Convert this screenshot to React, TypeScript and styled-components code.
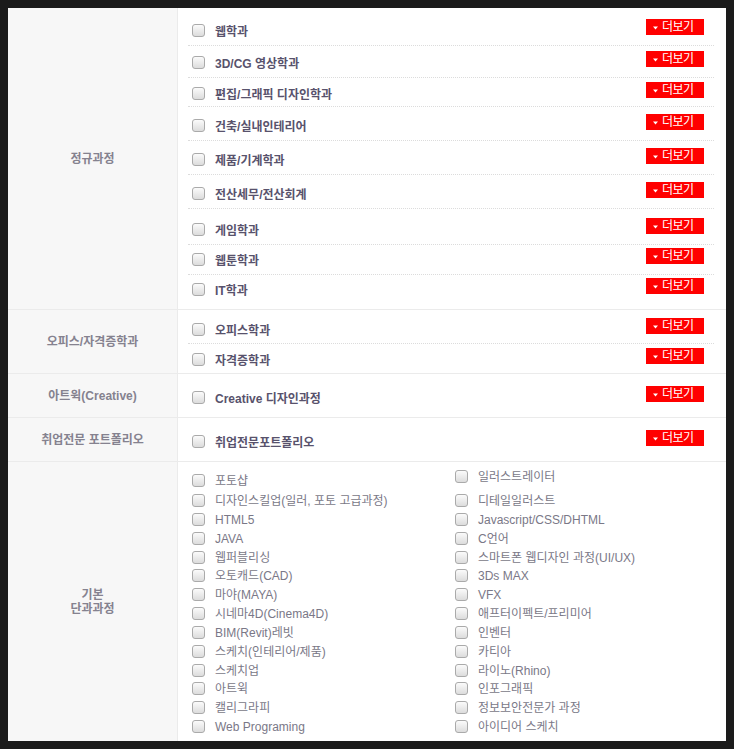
import React from 'react';
import styled, { createGlobalStyle } from 'styled-components';

const GlobalStyle = createGlobalStyle`
  html { background: #1b1b1b; }
  body {
    margin: 8px;
    background: #1b1b1b;
    font-family: "Liberation Sans", "Noto Sans CJK KR", sans-serif;
  }
`;

const Board = styled.div`
  background: #fff;
  width: 718px;
`;

const Section = styled.div<{ $last?: boolean }>`
  display: grid;
  grid-template-columns: 170px 1fr;
  border-bottom: ${(p) => (p.$last ? 'none' : '1px solid #ebebeb')};
`;

const Head = styled.div`
  background: #f7f7f7;
  border-right: 1px solid #ebebeb;
  display: flex;
  align-items: center;
  justify-content: center;
  text-align: center;
  color: #85828f;
  font-size: 12px;
  font-weight: 700;
  line-height: 14px;
  white-space: pre-line;
`;

const Body = styled.div`
  padding: 0 12px 0 10px;
`;

const Row = styled.div<{ $h: number; $pad: number; $last?: boolean }>`
  box-sizing: border-box;
  height: ${(p) => p.$h}px;
  padding-top: ${(p) => p.$pad}px;
  border-bottom: ${(p) => (p.$last ? 'none' : '1px dotted #dcdcdc')};
  display: flex;
  align-items: flex-start;
`;

const Check = styled.input.attrs({ type: 'checkbox' })<{ $top: number }>`
  appearance: none;
  -webkit-appearance: none;
  box-sizing: border-box;
  width: 13px;
  height: 13px;
  margin: ${(p) => p.$top}px 0 0 4px;
  flex: none;
  border: 1px solid #aaaaaa;
  border-radius: 3px;
  background: linear-gradient(#fbfbfb, #dcdcdc);
`;

const CourseLabel = styled.span`
  margin-left: 10px;
  padding-top: 5px;
  font-size: 12px;
  line-height: 16px;
  font-weight: 700;
  color: #58526c;
`;

const MoreButton = styled.a`
  margin-left: auto;
  margin-right: 10px;
  box-sizing: border-box;
  width: 58px;
  height: 16px;
  flex: none;
  background: #ff0000;
  color: #fff;
  display: flex;
  align-items: center;
  padding-left: 7px;
  gap: 4px;
  font-size: 12px;
  letter-spacing: -0.5px;
  line-height: 16px;
  cursor: pointer;
  text-decoration: none;
`;

const Chevron = styled.svg`
  flex: none;
  margin-top: 1px;
`;

const Grid = styled.div`
  display: grid;
  grid-template-columns: 1fr 1fr;
  height: 279px;
`;

const Column = styled.div<{ $pad: number }>`
  padding-top: ${(p) => p.$pad}px;
  display: flex;
  flex-direction: column;
`;

const Item = styled.div<{ $h: number }>`
  height: ${(p) => p.$h}px;
  display: flex;
  align-items: flex-start;
  flex: none;
`;

const ItemLabel = styled.span`
  margin-left: 10px;
  padding-top: 2px;
  font-size: 12px;
  line-height: 17px;
  color: #7a7887;
  white-space: nowrap;
`;

type Course = { label: string; h: number; pad: number };
type Group = { title: string; rows: Course[] };

const groups: Group[] = [
  {
    title: '정규과정',
    rows: [
      { label: '웹학과', h: 38, pad: 11 },
      { label: '3D/CG 영상학과', h: 32, pad: 5 },
      { label: '편집/그래픽 디자인학과', h: 29, pad: 4 },
      { label: '건축/실내인테리어', h: 34, pad: 7 },
      { label: '제품/기계학과', h: 34, pad: 7 },
      { label: '전산세무/전산회계', h: 34, pad: 7 },
      { label: '게임학과', h: 36, pad: 9 },
      { label: '웹툰학과', h: 30, pad: 3 },
      { label: 'IT학과', h: 34, pad: 3 },
    ],
  },
  {
    title: '오피스/자격증학과',
    rows: [
      { label: '오피스학과', h: 34, pad: 8 },
      { label: '자격증학과', h: 29, pad: 4 },
    ],
  },
  {
    title: '아트윅(Creative)',
    rows: [{ label: 'Creative 디자인과정', h: 43, pad: 12 }],
  },
  {
    title: '취업전문 포트폴리오',
    rows: [{ label: '취업전문포트폴리오', h: 43, pad: 12 }],
  },
];

const basicColumns: { pad: number; first: number; items: string[] }[] = [
  {
    pad: 9,
    first: 20,
    items: [
      '포토샵',
      '디자인스킬업(일러, 포토 고급과정)',
      'HTML5',
      'JAVA',
      '웹퍼블리싱',
      '오토캐드(CAD)',
      '마야(MAYA)',
      '시네마4D(Cinema4D)',
      'BIM(Revit)레빗',
      '스케치(인테리어/제품)',
      '스케치업',
      '아트윅',
      '캘리그라피',
      'Web Programing',
    ],
  },
  {
    pad: 5,
    first: 24,
    items: [
      '일러스트레이터',
      '디테일일러스트',
      'Javascript/CSS/DHTML',
      'C언어',
      '스마트폰 웹디자인 과정(UI/UX)',
      '3Ds MAX',
      'VFX',
      '애프터이펙트/프리미어',
      '인벤터',
      '카티아',
      '라이노(Rhino)',
      '인포그래픽',
      '정보보안전문가 과정',
      '아이디어 스케치',
    ],
  },
];

export default function App() {
  return (
    <>
      <GlobalStyle />
      <Board>
        {groups.map((g) => (
          <Section key={g.title}>
            <Head>{g.title}</Head>
            <Body>
              {g.rows.map((r, i) => (
                <Row key={r.label} $h={r.h} $pad={r.pad} $last={i === g.rows.length - 1}>
                  <Check $top={5} />
                  <CourseLabel>{r.label}</CourseLabel>
                  <MoreButton>
                    <Chevron width="5" height="4" viewBox="0 0 5 4">
                      <path d="M0 0.5 L2.5 3.5 L5 0.5 Z" fill="#fff" />
                    </Chevron>
                    더보기
                  </MoreButton>
                </Row>
              ))}
            </Body>
          </Section>
        ))}
        <Section $last>
          <Head>{'기본\n단과과정'}</Head>
          <Body>
            <Grid>
              {basicColumns.map((c, ci) => (
                <Column key={ci} $pad={c.pad}>
                  {c.items.map((it, i) => (
                    <Item key={it} $h={i === 0 ? c.first : 18.85}>
                      <Check $top={3} />
                      <ItemLabel>{it}</ItemLabel>
                    </Item>
                  ))}
                </Column>
              ))}
            </Grid>
          </Body>
        </Section>
      </Board>
    </>
  );
}
